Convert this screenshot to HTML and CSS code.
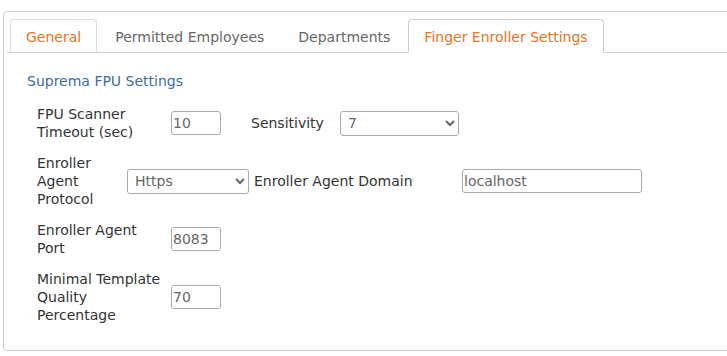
FILE: index.html
```html
<!DOCTYPE html>
<html lang="en">
<head>
    <meta charset="UTF-8">
    <title>Finger Enroller Settings</title>
    <link rel="stylesheet" href="styles.css">
</head>
<body>
    <div class="panel">
        <ul class="tabs">
            <li class="tab hover">General</li>
            <li class="tab">Permitted Employees</li>
            <li class="tab">Departments</li>
            <li class="tab active">Finger Enroller Settings</li>
        </ul>

        <div class="tab-body">
            <h3 class="section-title">Suprema FPU Settings</h3>

            <div class="rows">
                <div class="row">
                    <label class="lbl lbl-wide" for="timeout">FPU Scanner Timeout (sec)</label>
                    <input class="num" type="text" id="timeout" value="10">
                    <label class="lbl lbl-sens" for="sens">Sensitivity</label>
                    <select class="sel sel-sens" id="sens">
                        <option>7</option>
                    </select>
                </div>

                <div class="row">
                    <label class="lbl lbl-narrow" for="protocol">Enroller Agent Protocol</label>
                    <select class="sel sel-proto" id="protocol">
                        <option>Https</option>
                        <option>Http</option>
                    </select>
                    <label class="lbl lbl-domain" for="domain">Enroller Agent Domain</label>
                    <input class="txt" type="text" id="domain" value="localhost">
                </div>

                <div class="row">
                    <label class="lbl lbl-wide" for="port">Enroller Agent Port</label>
                    <input class="num" type="text" id="port" value="8083">
                </div>

                <div class="row">
                    <label class="lbl lbl-wide" for="quality">Minimal Template Quality Percentage</label>
                    <input class="num" type="text" id="quality" value="70">
                </div>
            </div>
        </div>
    </div>
</body>
</html>
```

FILE: styles.css
```css
* {
    margin: 0;
    padding: 0;
    box-sizing: border-box;
}

body {
    background: #fff;
    font-family: "DejaVu Sans", "Noto Sans", sans-serif;
    color: #333;
}

.panel {
    margin: 11px 0 0 3px;
    width: 740px;
    height: 340px;
    border: 1px solid #ccc;
    border-radius: 4px;
    padding: 7px 3px 0 3px;
}

.tabs {
    list-style: none;
    display: flex;
    border-bottom: 1px solid #ccc;
    padding-left: 3px;
}

.tab {
    height: 34px;
    margin-bottom: -1px;
    margin-right: 2px;
    padding: 1px 15px 0 15px;
    display: flex;
    align-items: center;
    font-size: 14px;
    color: #666;
    border: 1px solid transparent;
    border-radius: 4px 4px 0 0;
}

.tab.hover {
    color: #e8731f;
    border-color: #ddd;
    border-bottom-color: #ccc;
}

.tab.active {
    color: #e8731f;
    border-color: #ccc;
    border-bottom-color: #fff;
    background: #fff;
}

.tab-body {
    padding: 18px 0 0 20px;
}

.section-title {
    font-size: 14px;
    font-weight: normal;
    color: #3d6d9e;
    line-height: 20px;
}

.rows {
    display: flex;
    flex-direction: column;
    gap: 13px;
    padding: 14px 0 0 10px;
}

.row {
    display: flex;
    align-items: center;
}

.lbl {
    font-size: 14px;
    line-height: 18px;
    color: #333;
}

.lbl-wide {
    width: 134px;
    padding-right: 6px;
}

.lbl-narrow {
    width: 90px;
    padding-right: 2px;
}

.lbl-sens {
    width: 89px;
    margin-left: 30px;
}

.lbl-domain {
    width: 208px;
    margin-left: 5px;
}

input,
select {
    font-family: inherit;
    font-size: 14px;
    color: #666;
    border: 1px solid #aaa;
    border-radius: 3px;
    background: #fff;
    height: 24px;
}

.num {
    width: 50px;
    padding: 0 1px;
}

.txt {
    width: 180px;
    padding: 0 1px;
}

.sel {
    height: 25px;
    padding: 0 3px;
}

.sel-sens {
    width: 119px;
}

.sel-proto {
    width: 122px;
}
```
